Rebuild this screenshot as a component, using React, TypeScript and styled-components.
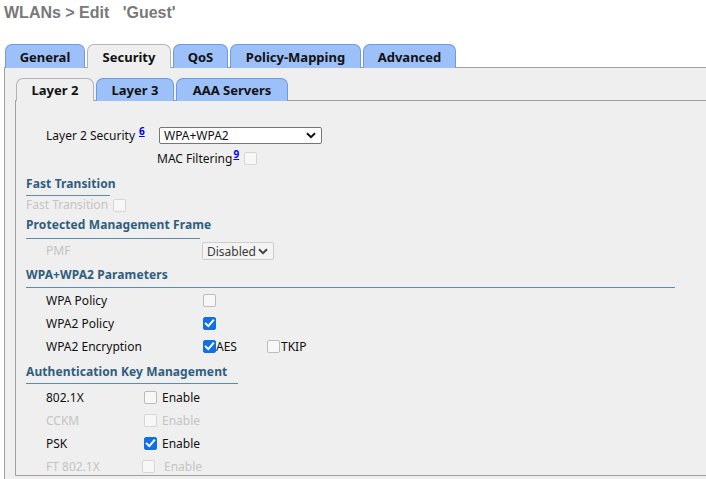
import React from 'react';
import styled, { createGlobalStyle } from 'styled-components';

const GlobalStyle = createGlobalStyle`
  html, body { margin: 0; padding: 0; background: #ffffff; }
  body {
    font-family: "Noto Sans", "DejaVu Sans", sans-serif;
    font-size: 12px;
    line-height: 16px;
    color: #111;
  }
`;

const Page = styled.div`
  width: 706px;
  height: 479px;
  overflow: hidden;
`;

const Title = styled.h1`
  margin: 0;
  padding: 4px 0 0 4px;
  height: 18px;
  line-height: 18px;
  font: bold 16px "Liberation Sans", Arial, sans-serif;
  color: #787878;
  white-space: pre;
`;

const TabStrip = styled.div<{ $h: number; $mt: number }>`
  display: flex;
  align-items: flex-end;
  gap: 2px;
  box-sizing: border-box;
  height: ${p => p.$h}px;
  margin-top: ${p => p.$mt}px;
  padding-left: 1px;
  border-bottom: 1px solid #a0a0a0;
`;

const OuterStrip = styled(TabStrip)`
  margin-left: 4px;
`;

const Tab = styled.div<{ $w: number; $h: number; $active?: boolean }>`
  box-sizing: border-box;
  width: ${p => p.$w}px;
  height: ${p => p.$h}px;
  margin-bottom: -1px;
  display: flex;
  align-items: center;
  justify-content: center;
  font: bold 13px "Noto Sans", sans-serif;
  color: #111;
  border: 1px solid ${p => (p.$active ? '#b4b4b4' : '#6e9ae0')};
  border-bottom: none;
  border-radius: 7px 7px 0 0;
  background: ${p => (p.$active ? '#efefef' : '#9dc0f9')};
  white-space: nowrap;
`;

const OuterPanel = styled.div`
  margin-left: 4px;
  width: 760px;
  height: 420px;
  border-left: 1px solid #a0a0a0;
  background: #efefef;
  padding: 10px 0 0 10px;
`;

const InnerBody = styled.div`
  box-sizing: border-box;
  height: 375px;
  border-left: 1px solid #a0a0a0;
  border-bottom: 1px solid #a0a0a0;
  padding: 23px 0 0 10px;
  overflow: hidden;
`;

const Row = styled.div<{ $cols: string; $h?: number }>`
  display: grid;
  grid-template-columns: ${p => p.$cols};
  align-items: center;
  height: ${p => p.$h ?? 23}px;
`;

const RowGroup = styled.div<{ $mt: number }>`
  margin-top: ${p => p.$mt}px;
`;

const Label = styled.span<{ $indent?: number; $muted?: boolean }>`
  padding-left: ${p => p.$indent ?? 20}px;
  color: ${p => (p.$muted ? '#c4c4c4' : '#111')};
  white-space: nowrap;
`;

const SectionHeader = styled.div<{ $w: number; $pt: number; $pb: number }>`
  width: ${p => p.$w}px;
  padding: ${p => p.$pt}px 0 ${p => p.$pb}px;
  font-weight: bold;
  letter-spacing: 0.1px;
  color: #2f5d80;
  border-bottom: 1px solid #5b8dab;
  white-space: nowrap;
`;

const Note = styled.a<{ $ml: number }>`
  margin-left: ${p => p.$ml}px;
  font-size: 10px;
  font-weight: bold;
  color: #0000ee;
  text-decoration: underline;
  vertical-align: 5px;
  line-height: 0;
  cursor: pointer;
`;

const Inline = styled.span<{ $gap: number }>`
  display: inline-flex;
  align-items: center;
  gap: ${p => p.$gap}px;
`;

const Option = styled.span<{ $w?: number; $gap: number; $muted?: boolean }>`
  display: inline-flex;
  align-items: center;
  gap: ${p => p.$gap}px;
  width: ${p => (p.$w ? `${p.$w}px` : 'auto')};
  color: ${p => (p.$muted ? '#c4c4c4' : '#111')};
  white-space: nowrap;
`;

const Box = styled.span<{ $checked?: boolean; $muted?: boolean }>`
  box-sizing: border-box;
  width: 13px;
  height: 13px;
  flex-shrink: 0;
  display: inline-flex;
  align-items: center;
  justify-content: center;
  border-radius: 2px;
  border: 1px solid ${p => (p.$checked ? '#1170e4' : p.$muted ? '#d6d6d6' : '#bcbcbc')};
  background: ${p => (p.$checked ? '#1170e4' : '#f7f7f7')};
`;

const SelectBox = styled.div<{ $w: number; $h: number; $muted?: boolean }>`
  box-sizing: border-box;
  width: ${p => p.$w}px;
  height: ${p => p.$h}px;
  display: flex;
  align-items: center;
  justify-content: space-between;
  padding: 0 5px 0 4px;
  background: ${p => (p.$muted ? '#f3f3f3' : '#ffffff')};
  border: 1px solid ${p => (p.$muted ? '#cdcdcd' : '#767676')};
  border-radius: 2px;
  color: ${p => (p.$muted ? '#3a3a3a' : '#111')};
  line-height: 15px;
  white-space: nowrap;
`;

function Checkbox({ checked, muted }: { checked?: boolean; muted?: boolean }) {
  return (
    <Box $checked={checked} $muted={muted} role="checkbox" aria-checked={!!checked}>
      {checked && (
        <svg width="11" height="11" viewBox="0 0 11 11">
          <path d="M1.8 5.6 L4.3 8.1 L9.2 2.4" stroke="#fff" strokeWidth="2" fill="none" strokeLinecap="square" />
        </svg>
      )}
    </Box>
  );
}

function Select({ value, w, h, muted }: { value: string; w: number; h: number; muted?: boolean }) {
  return (
    <SelectBox $w={w} $h={h} $muted={muted}>
      <span>{value}</span>
      <svg width="10" height="7" viewBox="0 0 10 7">
        <path d="M1 1.2 L5 5.2 L9 1.2" stroke={muted ? '#444' : '#111'} strokeWidth="2" fill="none" />
      </svg>
    </SelectBox>
  );
}

export default function App() {
  return (
    <Page>
      <GlobalStyle />
      <Title>{"WLANs > Edit   'Guest'"}</Title>
      <OuterStrip $h={24} $mt={22}>
        <Tab $w={80} $h={24}>General</Tab>
        <Tab $w={84} $h={24} $active>Security</Tab>
        <Tab $w={55} $h={24}>QoS</Tab>
        <Tab $w={131} $h={24}>Policy-Mapping</Tab>
        <Tab $w={93} $h={24}>Advanced</Tab>
      </OuterStrip>
      <OuterPanel>
        <TabStrip $h={23} $mt={0}>
          <Tab $w={78} $h={23} $active>Layer 2</Tab>
          <Tab $w={78} $h={23}>Layer 3</Tab>
          <Tab $w={112} $h={23}>AAA Servers</Tab>
        </TabStrip>
        <InnerBody>
          <Row $cols="133px 163px">
            <Label>
              Layer 2 Security<Note $ml={4}>6</Note>
            </Label>
            <Select value="WPA+WPA2" w={163} h={17} />
          </Row>
          <Row $cols="131px auto">
            <span />
            <Inline $gap={5}>
              <span>
                MAC Filtering<Note $ml={1}>9</Note>
              </span>
              <Checkbox muted />
            </Inline>
          </Row>

          <SectionHeader $w={84} $pt={6} $pb={3}>Fast Transition</SectionHeader>
          <Row $cols="87px auto" $h={18}>
            <Label $indent={0} $muted>Fast Transition</Label>
            <Checkbox muted />
          </Row>

          <SectionHeader $w={174} $pt={3} $pb={5}>Protected Management Frame</SectionHeader>
          <Row $cols="176px auto" $h={24}>
            <Label $muted>PMF</Label>
            <Select value="Disabled" w={72} h={18} muted />
          </Row>

          <SectionHeader $w={649} $pt={4} $pb={4}>WPA+WPA2 Parameters</SectionHeader>
          <RowGroup $mt={1}>
            <Row $cols="177px auto">
              <Label>WPA Policy</Label>
              <Checkbox />
            </Row>
            <Row $cols="177px auto">
              <Label>WPA2 Policy</Label>
              <Checkbox checked />
            </Row>
            <Row $cols="177px auto">
              <Label>WPA2 Encryption</Label>
              <Inline $gap={0}>
                <Option $w={64} $gap={0}>
                  <Checkbox checked />AES
                </Option>
                <Option $gap={1}>
                  <Checkbox />TKIP
                </Option>
              </Inline>
            </Row>
          </RowGroup>

          <SectionHeader $w={212} $pt={6} $pb={3}>Authentication Key Management</SectionHeader>
          <RowGroup $mt={2}>
            <Row $cols="118px auto">
              <Label>802.1X</Label>
              <Option $gap={5}>
                <Checkbox />Enable
              </Option>
            </Row>
            <Row $cols="118px auto">
              <Label $muted>CCKM</Label>
              <Option $gap={5} $muted>
                <Checkbox muted />Enable
              </Option>
            </Row>
            <Row $cols="118px auto">
              <Label>PSK</Label>
              <Option $gap={5}>
                <Checkbox checked />Enable
              </Option>
            </Row>
            <Row $cols="116px auto">
              <Label $muted>FT 802.1X</Label>
              <Option $gap={9} $muted>
                <Checkbox muted />Enable
              </Option>
            </Row>
          </RowGroup>
        </InnerBody>
      </OuterPanel>
    </Page>
  );
}
